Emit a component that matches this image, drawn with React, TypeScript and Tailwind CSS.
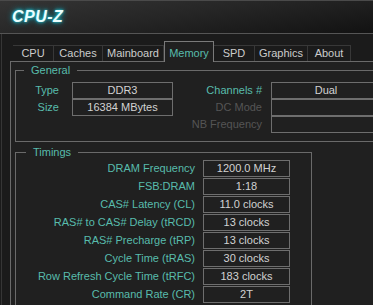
import React from "react";

const tabs = [
  { name: "CPU", w: "w-[41px]" },
  { name: "Caches", w: "w-[49px]" },
  { name: "Mainboard", w: "w-[61px]" },
  { name: "Memory", w: "w-[50px]", active: true },
  { name: "SPD", w: "w-[41px]" },
  { name: "Graphics", w: "w-[53px]" },
  { name: "About", w: "w-[43px]" },
];

const timings = [
  ["DRAM Frequency", "1200.0 MHz"],
  ["FSB:DRAM", "1:18"],
  ["CAS# Latency (CL)", "11.0 clocks"],
  ["RAS# to CAS# Delay (tRCD)", "13 clocks"],
  ["RAS# Precharge (tRP)", "13 clocks"],
  ["Cycle Time (tRAS)", "30 clocks"],
  ["Row Refresh Cycle Time (tRFC)", "183 clocks"],
  ["Command Rate (CR)", "2T"],
];

const Box = ({ value, className }: { value: string; className: string }) => (
  <div
    className={`h-[17px] border border-[#6e6e6e] flex items-center justify-center text-[#d2d2d2] leading-none ${className}`}
  >
    {value}
  </div>
);

export default function App() {
  return (
    <div className="w-[373px] h-[305px] overflow-hidden bg-[#1b1b1b] font-['Liberation_Sans',Arial,sans-serif] text-[11px]">
      {/* title bar */}
      <div className="h-[34px] border-t border-[#4a4a4a] border-b border-b-[#555] bg-[linear-gradient(172deg,#343434_0%,#262626_45%,#121212_100%)] flex items-center pl-[12px]">
        <span className="text-[16px] font-bold italic text-[#eaffff] [text-shadow:0_0_3px_#22e0f0,0_0_6px_#00b8d0] tracking-[0.5px]">
          CPU-Z
        </span>
      </div>

      <div className="ml-[1px] border-l border-[#363636] pl-[8px]">
        {/* tabs */}
        <div className="h-[27px] flex items-end pl-[3px] relative z-10">
          {tabs.map((t) =>
            t.active ? (
              <div
                key={t.name}
                className={`${t.w} h-[21px] -mb-[1px] border border-b-0 border-[#7a7a7a] bg-[#202020] text-[#58bcac] flex justify-center pt-[3px]`}
              >
                {t.name}
              </div>
            ) : (
              <div
                key={t.name}
                className={`${t.w} h-[16px] border-t border-r border-[#383838] text-[#cccccc] flex items-center justify-center`}
              >
                {t.name}
              </div>
            )
          )}
        </div>

        {/* panel */}
        <div className="border-t border-l border-[#6a6a6a] bg-[#202020] pl-[4px] pt-[1px] h-[300px]">
          <fieldset className="w-[400px] border border-[#6a6a6a] pb-[8px]">
            <legend className="ml-[8px] px-[7px] leading-[14px] text-[#58bcac]">General</legend>
            <div className="flex pt-[5px]">
              <div className="flex flex-col">
                {[
                  ["Type", "DDR3"],
                  ["Size", "16384 MBytes"],
                ].map(([l, v]) => (
                  <div key={l} className="flex items-center">
                    <span className="w-[43px] text-right text-[#58bcac]">{l}</span>
                    <Box value={v} className="ml-[13px] w-[101px]" />
                  </div>
                ))}
              </div>
              <div className="flex flex-col">
                {[
                  ["Channels #", "Dual", false],
                  ["DC Mode", "", true],
                  ["NB Frequency", "", true],
                ].map(([l, v, dim]) => (
                  <div key={l as string} className="flex items-center">
                    <span
                      className={`w-[89px] text-right ${dim ? "text-[#555555]" : "text-[#58bcac]"}`}
                    >
                      {l}
                    </span>
                    <Box value={v as string} className="ml-[9px] w-[110px]" />
                  </div>
                ))}
              </div>
            </div>
          </fieldset>

          <fieldset className="mt-[3px] w-[297px] border border-[#6a6a6a] pb-[8px]">
            <legend className="ml-[10px] px-[7px] leading-[14px] text-[#58bcac]">Timings</legend>
            <div className="flex flex-col gap-[1px] pt-[1px]">
              {timings.map(([l, v]) => (
                <div key={l} className="flex items-center">
                  <span className="w-[179px] text-right text-[#58bcac]">{l}</span>
                  <Box value={v} className="ml-[8px] w-[87px]" />
                </div>
              ))}
            </div>
          </fieldset>
        </div>
      </div>
    </div>
  );
}
